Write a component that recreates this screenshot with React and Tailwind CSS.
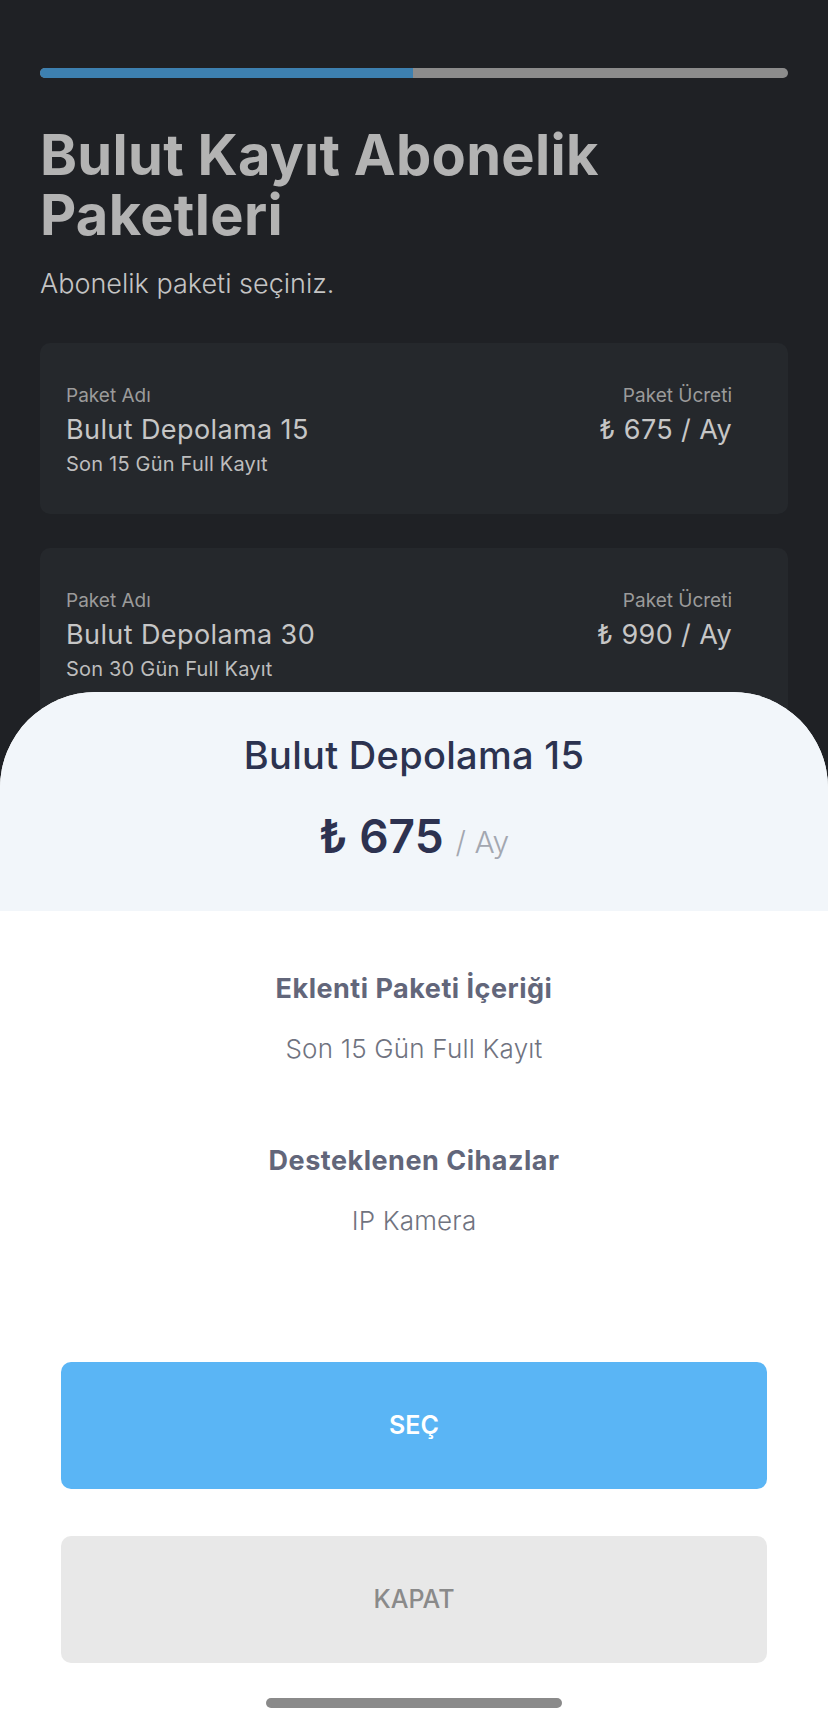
import React from "react";

const packages = [
  { name: "Bulut Depolama 15", desc: "Son 15 Gün Full Kayıt", price: "₺ 675 / Ay" },
  { name: "Bulut Depolama 30", desc: "Son 30 Gün Full Kayıt", price: "₺ 990 / Ay" },
];

const PackageCard = ({ pkg }) => (
  <div className="flex justify-between rounded-[10px] bg-[#25282c] pl-[26px] pr-[56px] pt-[41px] pb-[38px]">
    <div className="flex flex-col">
      <span className="text-[19px] leading-[24px] text-[#9b9b9b]">Paket Adı</span>
      <span className="mt-[6px] text-[27px] leading-[32px] tracking-[0.4px] text-[#c6c6c6]">{pkg.name}</span>
      <span className="mt-[6px] text-[20px] leading-[24px] tracking-[0.2px] text-[#bdbdbd]">{pkg.desc}</span>
    </div>
    <div className="flex flex-col items-end">
      <span className="text-[19px] leading-[24px] text-[#9b9b9b]">Paket Ücreti</span>
      <span className="mt-[6px] text-[27px] leading-[32px] tracking-[0.4px] text-[#c6c6c6]">{pkg.price}</span>
    </div>
  </div>
);

export default function App() {
  return (
    <div className="relative h-[1724px] w-[828px] overflow-hidden bg-[#1f2125] font-['Inter',sans-serif]">
      <div className="flex flex-col px-[40px] pt-[68px]">
        <div className="flex h-[10px] w-full overflow-hidden rounded-full bg-[#8c8c8c]">
          <div className="h-full w-[373px] bg-[#3d80b0]" />
        </div>

        <h1 className="mt-[47px] text-[56px] font-bold leading-[60px] tracking-[0.3px] text-[#b3b3b3]">
          Bulut Kayıt Abonelik
          <br />
          Paketleri
        </h1>
        <p className="mt-[21px] text-[27px] font-light leading-[36px] text-[#c4c4c4]">
          Abonelik paketi seçiniz.
        </p>

        <div className="mt-[41px] flex flex-col gap-[34px]">
          {packages.map((pkg) => (
            <PackageCard key={pkg.name} pkg={pkg} />
          ))}
        </div>
      </div>

      {/* Bottom sheet */}
      <div className="absolute inset-x-0 top-[692px] bottom-0 flex flex-col overflow-hidden rounded-t-[96px] bg-white">
        <div className="flex h-[219px] flex-col items-center bg-[#f2f6fa] pt-[40px]">
          <h2 className="text-[38px] font-medium leading-[46px] tracking-[0.3px] text-[#2c3350]">Bulut Depolama 15</h2>
          <div className="mt-[30px] flex items-baseline leading-[56px]">
            <span className="text-[46px] font-semibold text-[#2d3250]">₺ 675</span>
            <span className="ml-[12px] text-[30px] font-light text-[#a3a7b0]">/ Ay</span>
          </div>
        </div>

        <div className="flex flex-col items-center">
          <h3 className="mt-[60px] text-[27px] font-bold leading-[36px] tracking-[0.5px] text-[#62667a]">
            Eklenti Paketi İçeriği
          </h3>
          <p className="mt-[26px] text-[26px] font-light leading-[32px] tracking-[0.2px] text-[#70737f]">
            Son 15 Gün Full Kayıt
          </p>
          <h3 className="mt-[78px] text-[27px] font-bold leading-[36px] tracking-[0.5px] text-[#62667a]">
            Desteklenen Cihazlar
          </h3>
          <p className="mt-[26px] text-[26px] font-light leading-[32px] tracking-[0.2px] text-[#70737f]">
            IP Kamera
          </p>
        </div>

        <div className="mt-[125px] flex flex-col gap-[47px] px-[61px]">
          <button className="flex h-[127px] items-center justify-center rounded-[10px] bg-[#5ab5f5] text-[25px] font-semibold text-white">
            SEÇ
          </button>
          <button className="flex h-[127px] items-center justify-center rounded-[10px] bg-[#e8e8e8] text-[25px] font-medium text-[#8a8a8a]">
            KAPAT
          </button>
        </div>

        <div className="mt-[35px] flex justify-center">
          <div className="h-[10px] w-[296px] rounded-full bg-[#8a8a8a]" />
        </div>
      </div>
    </div>
  );
}
